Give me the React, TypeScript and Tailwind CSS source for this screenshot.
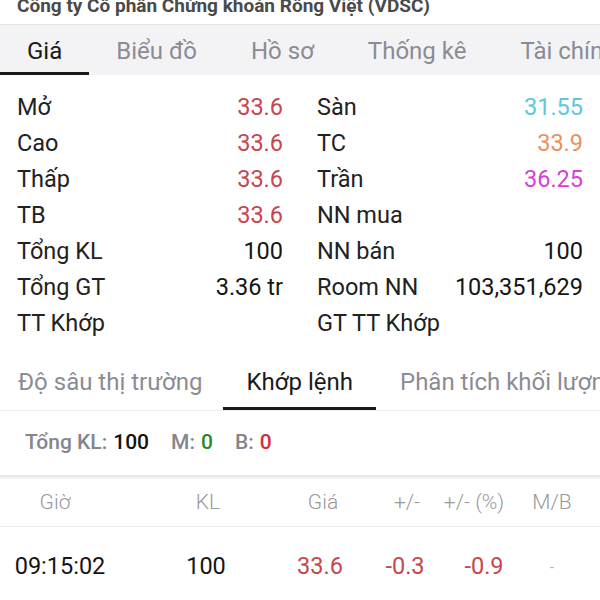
import React from "react";

const RED = "text-[#c6464f]";

function InfoRow({ label, value, color }: { label: string; value?: string; color?: string }) {
  return (
    <div className="flex h-[36px] items-center justify-between">
      <span className="text-[#222222]">{label}</span>
      <span className={color ?? "text-[#151515]"}>{value ?? ""}</span>
    </div>
  );
}

export default function App() {
  const topTabs = ["Giá", "Biểu đồ", "Hồ sơ", "Thống kê", "Tài chính"];
  const left: { label: string; value?: string; color?: string }[] = [
    { label: "Mở", value: "33.6", color: RED },
    { label: "Cao", value: "33.6", color: RED },
    { label: "Thấp", value: "33.6", color: RED },
    { label: "TB", value: "33.6", color: RED },
    { label: "Tổng KL", value: "100" },
    { label: "Tổng GT", value: "3.36 tr" },
    { label: "TT Khớp" },
  ];
  const right: { label: string; value?: string; color?: string }[] = [
    { label: "Sàn", value: "31.55", color: "text-[#5ec7dc]" },
    { label: "TC", value: "33.9", color: "text-[#e8925e]" },
    { label: "Trần", value: "36.25", color: "text-[#d63fd8]" },
    { label: "NN mua" },
    { label: "NN bán", value: "100" },
    { label: "Room NN", value: "103,351,629" },
    { label: "GT TT Khớp" },
  ];

  return (
    <div
      className="w-[600px] h-[600px] overflow-hidden bg-white"
      style={{ fontFamily: "Roboto, 'Noto Sans', sans-serif" }}
    >
      {/* Title */}
      <div className="h-[24px] overflow-hidden">
        <div className="mt-[-4px] pl-[17px] text-[19px] leading-none font-bold text-[#4a4a4a] whitespace-nowrap">
          Công ty Cổ phần Chứng khoán Rồng Việt (VDSC)
        </div>
      </div>

      {/* Top tabs */}
      <div className="flex h-[51px] bg-[#f3f3f5] border-t border-[#e4e4e6] whitespace-nowrap text-[24px] overflow-hidden">
        {topTabs.map((t, i) => (
          <div
            key={t}
            className={
              i === 0
                ? "flex items-center px-[27px] pt-[4px] border-b-[3px] border-[#1a1a1a] text-[#1a1a1a]"
                : "flex items-center px-[27px] pt-[4px] border-b-[3px] border-transparent text-[#8b8b95]"
            }
          >
            {t}
          </div>
        ))}
      </div>

      {/* Info grid */}
      <div className="grid grid-cols-2 gap-x-[34px] px-[17px] pt-[15px] text-[23.5px] leading-none">
        <div className="flex flex-col">
          {left.map((r) => (
            <InfoRow key={r.label} {...r} />
          ))}
        </div>
        <div className="flex flex-col">
          {right.map((r) => (
            <InfoRow key={r.label} {...r} />
          ))}
        </div>
      </div>

      {/* Second tabs */}
      <div className="flex h-[69px] border-b border-[#eeeeee] whitespace-nowrap text-[24px] overflow-hidden">
        <div className="flex items-center pl-[18px] pr-[20px] pt-[14px] border-b-[3px] border-transparent text-[#8b8b95]">
          Độ sâu thị trường
        </div>
        <div className="flex items-center pl-[24px] pr-[23px] pt-[14px] border-b-[3px] border-[#1a1a1a] text-[#1a1a1a]">
          Khớp lệnh
        </div>
        <div className="flex items-center pl-[24px] pt-[14px] border-b-[3px] border-transparent text-[#8b8b95]">
          Phân tích khối lượng
        </div>
      </div>

      {/* Summary */}
      <div className="flex h-[64px] items-center pl-[25px] text-[21px] font-medium">
        <span className="text-[#85858d]">Tổng KL:</span>
        <span className="ml-[6px] text-[#111111]">100</span>
        <span className="ml-[22px] text-[#85858d]">M:</span>
        <span className="ml-[6px] text-[#1f8a2c]">0</span>
        <span className="ml-[22px] text-[#85858d]">B:</span>
        <span className="ml-[6px] text-[#d42b3b]">0</span>
      </div>

      {/* Separator */}
      <div className="h-[4px] bg-gradient-to-b from-[#e4e4e4] to-[#f7f7f7]" />

      {/* Header row */}
      <div className="flex h-[48px] items-center border-b border-[#eeeeee] text-[21px] font-light text-[#9a9a9a] whitespace-nowrap">
        <div className="flex w-[110px] justify-center">Giờ</div>
        <div className="flex w-[196px] justify-center">KL</div>
        <div className="flex w-[34px] justify-center">Giá</div>
        <div className="ml-[34px] flex w-[66px] justify-center">+/-</div>
        <div className="flex w-[68px] justify-center">+/- (%)</div>
        <div className="flex w-[88px] justify-center">M/B</div>
      </div>

      {/* Data row */}
      <div className="flex h-[74px] items-center pt-[6px] text-[23.5px] whitespace-nowrap">
        <div className="flex w-[110px] justify-center pl-[10px] text-[#151515]">09:15:02</div>
        <div className="flex w-[196px] justify-center pr-[4px] text-[#151515]">100</div>
        <div className={`flex w-[34px] justify-center pr-[6px] ${RED}`}>33.6</div>
        <div className={`ml-[34px] flex w-[66px] justify-center pr-[4px] ${RED}`}>-0.3</div>
        <div className={`flex w-[68px] justify-center pl-[20px] ${RED}`}>-0.9</div>
        <div className="flex w-[88px] justify-center text-[14px] text-[#b0b0b0]">-</div>
      </div>
    </div>
  );
}
